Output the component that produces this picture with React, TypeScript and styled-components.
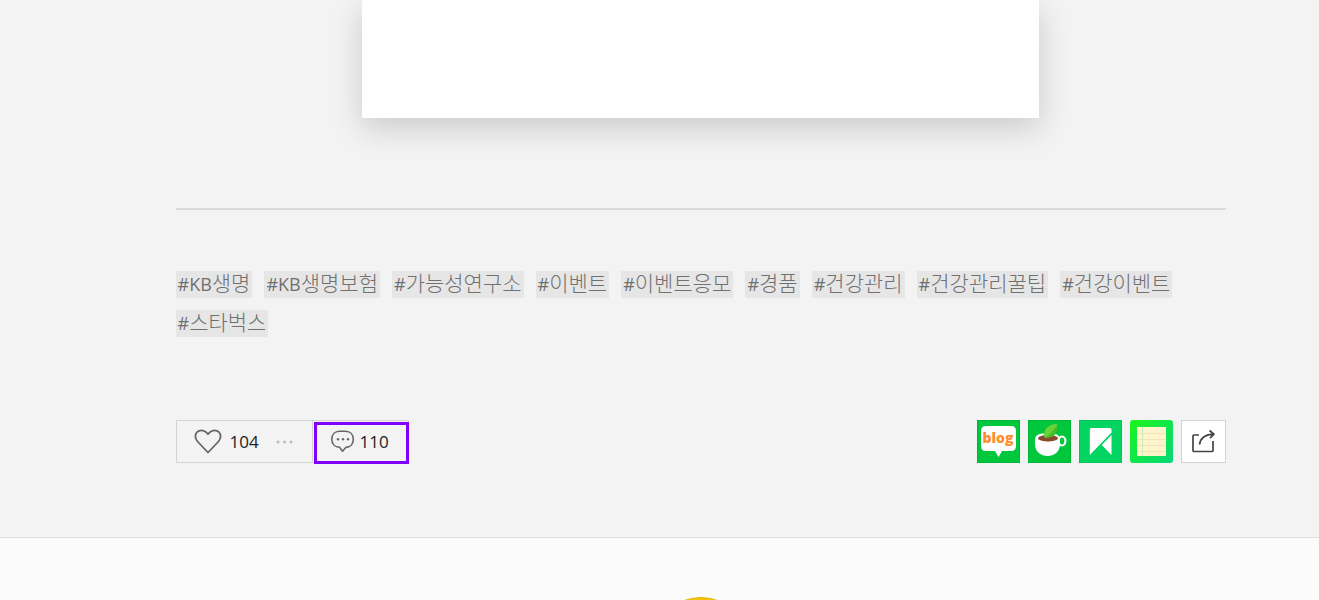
import React from "react";
import styled, { createGlobalStyle } from "styled-components";

const GlobalStyle = createGlobalStyle`
  *, *::before, *::after { box-sizing: border-box; }
  body {
    margin: 0;
    background: #f3f3f3;
    font-family: "Open Sans", "Noto Sans CJK KR", sans-serif;
  }
`;

const Page = styled.div`
  display: flex;
  flex-direction: column;
  height: 100vh;
  overflow: hidden;
`;

const PostArea = styled.div`
  flex: none;
  padding-left: 82px;
`;

const Post = styled.main`
  width: 100%;
  max-width: 1050px;
  margin: 0 auto;
  padding-bottom: 74px;
`;

const Card = styled.section`
  width: 65%;
  max-width: 677px;
  height: 118px;
  margin: 0 auto 90px;
  background: #fff;
  box-shadow: 0 10px 30px rgba(0, 0, 0, 0.17);
`;

const Divider = styled.hr`
  height: 2px;
  margin: 0 0 61px;
  border: 0;
  background: #dadada;
`;

const TagList = styled.ul`
  display: flex;
  flex-wrap: wrap;
  gap: 12px;
  margin: 0 0 83px;
  padding: 0;
  list-style: none;
`;

const Tag = styled.a`
  display: block;
  height: 27px;
  padding: 0 2px;
  background: #e6e6e6;
  color: #707070;
  font-family: "Noto Sans CJK KR", sans-serif;
  font-size: 21px;
  font-weight: 300;
  line-height: 23px;
  text-decoration: none;
  white-space: nowrap;
`;

const Latin = styled.span`
  font-family: "Open Sans", sans-serif;
  font-size: 18px;
  font-weight: 400;
`;

const ActionBar = styled.div`
  display: flex;
  justify-content: space-between;
  align-items: flex-start;
`;

const Reactions = styled.div`
  display: flex;
  height: 43px;
  border: 1px solid #d3d3d3;
`;

const Reaction = styled.button<{ $selected?: boolean }>`
  position: relative;
  display: flex;
  align-items: center;
  width: ${(p) => (p.$selected ? 96 : 135)}px;
  padding: ${(p) => (p.$selected ? "0 0 0 18px" : "0 0 0 17px")};
  border: 0;
  border-left: ${(p) => (p.$selected ? "1px solid #d3d3d3" : "0")};
  background: transparent;
  color: #222;
  font-family: "Open Sans", sans-serif;
  font-size: 17px;
  font-weight: 400;
  line-height: 24px;
  cursor: pointer;

  &::after {
    content: "";
    display: ${(p) => (p.$selected ? "block" : "none")};
    position: absolute;
    inset: 1px -1px -2px 1px;
    border: 3px solid #8000ff;
  }
`;

const Count = styled.span<{ $gap: number }>`
  margin-left: ${(p) => p.$gap}px;
`;

const Dots = styled.svg`
  margin-left: 17px;
`;

const ShareList = styled.div`
  display: flex;
  gap: 8px;
`;

const ShareButton = styled.button<{ $outlined?: boolean }>`
  display: flex;
  align-items: center;
  justify-content: center;
  width: ${(p) => (p.$outlined ? 45 : 43)}px;
  height: 43px;
  padding: 0;
  border: ${(p) => (p.$outlined ? "1px solid #d3d3d3" : "0")};
  background: ${(p) => (p.$outlined ? "#fff" : "transparent")};
  cursor: pointer;
`;

const BlogWord = styled.text`
  fill: #ff8f2c;
  font-family: "Open Sans", sans-serif;
  font-size: 14px;
  font-weight: 800;
  text-anchor: middle;
`;

const Author = styled.footer`
  flex: 1 0 auto;
  display: flex;
  justify-content: center;
  padding: 59px 0 40px 82px;
  border-top: 1px solid #dedede;
  background: #fbfbfb;
`;

const Avatar = styled.div`
  width: 100px;
  height: 100px;
  border: 1px solid #e3b90c;
  border-radius: 50%;
  background: #f5c400;
`;

const tags: [string, string][] = [
  ["#KB", "생명"],
  ["#KB", "생명보험"],
  ["#", "가능성연구소"],
  ["#", "이벤트"],
  ["#", "이벤트응모"],
  ["#", "경품"],
  ["#", "건강관리"],
  ["#", "건강관리꿀팁"],
  ["#", "건강이벤트"],
  ["#", "스타벅스"],
];

const HeartIcon = () => (
  <svg width="28" height="25" viewBox="0 0 28 25" fill="none" stroke="#666" strokeWidth="1.8" strokeLinejoin="round" aria-hidden="true">
    <path d="M14 23.500 3.500 12.500C.8 9.500.8 5.500 3 3.200 5.500.8 9.400.8 12 3.200L14 5.200l2-2c2.600-2.400 6.500-2.400 9 0 2.200 2.300 2.200 6.300-.5 9.300Z" />
  </svg>
);

const CommentIcon = () => (
  <svg width="24" height="24" viewBox="0 0 24 24" aria-hidden="true">
    <path d="M8.500 1.200h6c4.800 0 7.800 3.400 7.800 8.100 0 4.700-2.900 7.900-7.500 8.100L11.500 21.200 8.700 17.400C4 17.200.8 14 .8 9.300.8 4.600 3.700 1.200 8.500 1.200Z" fill="none" stroke="#666" strokeWidth="1.6" strokeLinejoin="round" />
    <g fill="#666">
      <circle cx="7" cy="9.200" r="1.200" />
      <circle cx="12" cy="9.200" r="1.200" />
      <circle cx="17" cy="9.200" r="1.200" />
    </g>
  </svg>
);

const BlogIcon = () => (
  <svg width="43" height="43" viewBox="0 0 43 43" aria-hidden="true">
    <rect x=".5" y=".5" width="42" height="42" fill="#00c73c" stroke="#00b436" />
    <path d="M9 6h25q5 0 5 5v15q0 5-5 5h-9l-3.500 6L18 31H9q-5 0-5-5V11q0-5 5-5Z" fill="#fff" />
    <BlogWord x="21" y="23">blog</BlogWord>
  </svg>
);

const CafeIcon = () => (
  <svg width="43" height="43" viewBox="0 0 43 43" aria-hidden="true">
    <rect x=".5" y=".5" width="42" height="42" fill="#00c73c" stroke="#00b436" />
    <ellipse cx="34" cy="21" rx="3.400" ry="4.500" fill="none" stroke="#fff" strokeWidth="2.200" />
    <path d="M7 19q0-6 12.500-6T32 19v5c0 8-6 12-12.500 12S7 32 7 24Z" fill="#fff" />
    <ellipse cx="20" cy="18.300" rx="10" ry="3.200" fill="#884a2b" />
    <path d="M17 18C13 10 20 4 29.500 4 30 13 27 18 17 18Z" fill="#43bd2a" />
    <path d="M17 18C14 10 21 4 29.500 4 26 10 22 14 17 18Z" fill="#6bd23c" />
  </svg>
);

const KeepIcon = () => (
  <svg width="43" height="43" viewBox="0 0 43 43" aria-hidden="true">
    <rect x=".5" y=".5" width="42" height="42" fill="#03d462" stroke="#02c459" />
    <path d="M12.500 8H31q1.500 0 1.500 1.500v3L10.800 35V10q0-2 1.700-2Z" fill="#fff" />
    <path d="M32.500 15V35L22.800 25Z" fill="#fff" />
  </svg>
);

const MemoIcon = () => (
  <svg width="43" height="43" viewBox="0 0 43 43" aria-hidden="true">
    <defs>
      <linearGradient id="memo" x1="0" y1="0" x2="1" y2="1">
        <stop offset="0" stopColor="#1df51d" />
        <stop offset="1" stopColor="#04d878" />
      </linearGradient>
    </defs>
    <rect width="43" height="43" rx="3" fill="url(#memo)" />
    <path d="M7 7h29v29H7Z" fill="#fff4cb" />
    <path d="M7 13.500h29M7 19.500h29M7 25.500h29M7 31.500h29" stroke="#f0e4ba" />
    <path d="M12.500 7v29" stroke="#c4eeb0" />
  </svg>
);

const ShareIcon = () => (
  <svg width="25" height="25" viewBox="0 0 25 25" fill="none" stroke="#444" strokeWidth="1.700" strokeLinejoin="round" aria-hidden="true">
    <path d="M8 6H3Q2 6 2 7v14.500Q2 22.500 3 22.500h18q1 0 1-1V12" />
    <path d="M8.500 15.500C9.500 9 14 5.500 23 5.200M18.500 1.500 23 5.200l-4 4" />
  </svg>
);

export default function App() {
  return (
    <>
      <GlobalStyle />
      <Page>
        <PostArea>
          <Post>
            <Card />
            <Divider />
            <TagList>
              {tags.map(([latin, korean]) => (
                <li key={latin + korean}>
                  <Tag href="#">
                    <Latin>{latin}</Latin>
                    {korean}
                  </Tag>
                </li>
              ))}
            </TagList>
            <ActionBar>
              <Reactions>
                <Reaction type="button" aria-label="공감 104">
                  <HeartIcon />
                  <Count $gap={8}>104</Count>
                  <Dots width="17" height="4" viewBox="0 0 17 4" fill="#bbb" aria-hidden="true">
                    <circle cx="2" cy="2" r="1.500" />
                    <circle cx="8.500" cy="2" r="1.500" />
                    <circle cx="15" cy="2" r="1.500" />
                  </Dots>
                </Reaction>
                <Reaction type="button" $selected aria-label="댓글 110">
                  <CommentIcon />
                  <Count $gap={5}>110</Count>
                </Reaction>
              </Reactions>
              <ShareList>
                <ShareButton type="button" aria-label="블로그"><BlogIcon /></ShareButton>
                <ShareButton type="button" aria-label="카페"><CafeIcon /></ShareButton>
                <ShareButton type="button" aria-label="Keep"><KeepIcon /></ShareButton>
                <ShareButton type="button" aria-label="메모"><MemoIcon /></ShareButton>
                <ShareButton type="button" $outlined aria-label="공유"><ShareIcon /></ShareButton>
              </ShareList>
            </ActionBar>
          </Post>
        </PostArea>
        <Author>
          <Avatar />
        </Author>
      </Page>
    </>
  );
}
